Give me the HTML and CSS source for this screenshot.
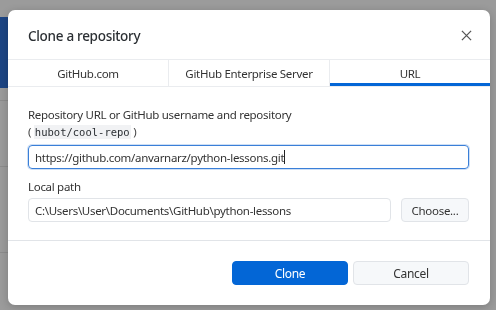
FILE: index.html
```html
<!DOCTYPE html>
<html lang="en">
<head>
  <meta charset="UTF-8">
  <title>Clone a repository</title>
  <link rel="stylesheet" href="styles.css">
</head>
<body>
  <div class="app">
    <div class="sidebar">
      <div class="repo-bar"></div>
      <div class="row-line"></div>
      <div class="row-line second"></div>
      <div class="row-line third"></div>
    </div>
  </div>

  <div class="dialog">
    <header class="dialog-header">
      <h1>Clone a repository</h1>
      <button class="close-button" aria-label="Close">
        <svg viewBox="0 0 12 12" width="11" height="11">
          <path d="M1 1 L11 11 M11 1 L1 11" stroke="#555" stroke-width="1.4" fill="none" />
        </svg>
      </button>
    </header>

    <nav class="tabs">
      <div class="tab">GitHub.com</div>
      <div class="tab">GitHub Enterprise Server</div>
      <div class="tab active">URL</div>
    </nav>

    <div class="dialog-body">
      <label class="field-label">Repository URL or GitHub username and repository</label>
      <div class="hint">( <code>hubot/cool-repo</code> )</div>
      <div class="text-input focused">https://github.com/anvarnarz/python-lessons.git<span class="caret"></span></div>

      <label class="field-label path-label">Local path</label>
      <div class="path-row">
        <div class="text-input">C:\Users\User\Documents\GitHub\python-lessons</div>
        <button class="button">Choose...</button>
      </div>
    </div>

    <footer class="dialog-footer">
      <button class="button primary">Clone</button>
      <button class="button">Cancel</button>
    </footer>
  </div>
</body>
</html>
```

FILE: styles.css
```css
* {
  margin: 0;
  padding: 0;
  box-sizing: border-box;
}

body {
  font-family: 'Noto Sans', 'Open Sans', sans-serif;
  font-size: 11.5px;
  letter-spacing: -0.3px;
  color: #24292e;
  background: #9b9b9b;
  width: 496px;
  height: 310px;
  overflow: hidden;
}

.app {
  height: 100%;
}

.sidebar {
  width: 8px;
  height: 100%;
  padding-top: 17px;
}

.repo-bar {
  height: 71px;
  background: #1d4584;
}

.row-line {
  height: 1px;
  background: #8c8c8c;
  margin-top: 12px;
}

.row-line.second {
  margin-top: 65px;
}

.row-line.third {
  margin-top: 85px;
}

.dialog {
  position: fixed;
  left: 8px;
  top: 10px;
  width: 482px;
  height: 295px;
  background: #fff;
  border-radius: 7px;
  box-shadow: 0 2px 8px rgba(0, 0, 0, 0.2);
  display: flex;
  flex-direction: column;
}

.dialog-header {
  height: 49px;
  display: flex;
  align-items: center;
  justify-content: space-between;
  padding: 0 14px 0 20px;
}

.dialog-header h1 {
  font-size: 13.5px;
  font-weight: 500;
  color: #2b2f33;
  margin-top: 2px;
}

.close-button {
  background: none;
  border: none;
  width: 20px;
  height: 20px;
  display: flex;
  align-items: center;
  justify-content: center;
  margin-top: 2px;
}

.tabs {
  display: flex;
  height: 28px;
  border-top: 1px solid #eaecef;
  border-bottom: 1px solid #eaecef;
}

.tab {
  flex: 1;
  display: flex;
  align-items: center;
  justify-content: center;
  color: #333;
  border-right: 1px solid #eaecef;
  padding-top: 1px;
}

.tab:last-child {
  border-right: none;
}

.tab.active {
  box-shadow: inset 0 -3px 0 #0366d6;
}

.dialog-body {
  padding: 19px 21px 0 20px;
  height: 154px;
  border-bottom: 1px solid #e1e4e8;
}

.field-label {
  display: block;
  line-height: 17px;
  color: #333;
}

.hint {
  line-height: 17px;
  color: #444;
  margin-bottom: 4px;
}

.hint code {
  font-family: 'DejaVu Sans Mono', monospace;
  font-size: 10.5px;
  letter-spacing: 0;
  color: #2b2f33;
  background: #f1f2f4;
  padding: 1px 1px;
}

.text-input {
  height: 24px;
  border: 1px solid #e1e4e8;
  border-radius: 4px;
  padding: 0 6px;
  display: flex;
  align-items: center;
  color: #333;
  white-space: nowrap;
}

.text-input.focused {
  border-color: #3a7fd8;
  box-shadow: 0 0 0 1px rgba(58, 127, 216, 0.25);
}

.caret {
  width: 1px;
  height: 14px;
  background: #222;
}

.path-label {
  margin-top: 9px;
  margin-bottom: 3px;
}

.path-row {
  display: flex;
  gap: 10px;
}

.path-row .text-input {
  flex: 1;
}

.path-row .button {
  width: 68px;
}

.button {
  font-family: inherit;
  font-size: 11.5px;
  letter-spacing: -0.3px;
  color: #333;
  height: 24px;
  padding: 0 6px;
  background: #f6f8fa;
  border: 1px solid #e1e4e8;
  border-radius: 4px;
}

.dialog-footer {
  flex: 1;
  display: flex;
  align-items: center;
  justify-content: flex-end;
  gap: 5px;
  padding: 0 21px 0 20px;
}

.dialog-footer .button {
  width: 116px;
  font-size: 12px;
}

.button.primary {
  background: #0366d6;
  border-color: #0366d6;
  color: #fff;
}
```
